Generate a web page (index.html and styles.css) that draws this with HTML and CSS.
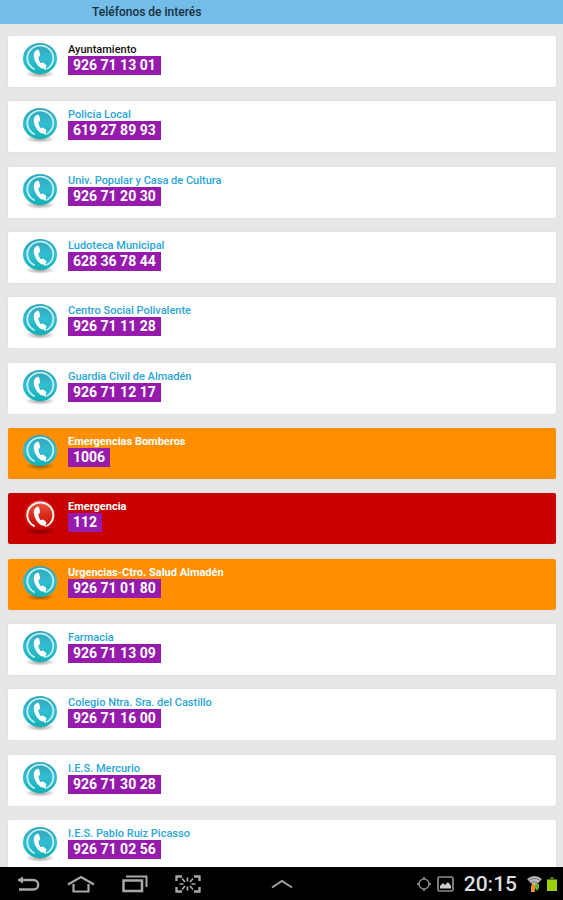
FILE: index.html
```html
<!DOCTYPE html>
<html lang="es">
<head>
<meta charset="utf-8">
<meta name="viewport" content="width=device-width, initial-scale=1">
<title>Teléfonos de interés</title>
<link rel="stylesheet" href="styles.css">
</head>
<body>
<svg class="defs" aria-hidden="true">
  <defs>
    <linearGradient id="teal" x1="0" y1="0" x2="0" y2="1">
      <stop offset="0" stop-color="#2fa5b8"/><stop offset=".5" stop-color="#33bdd2"/><stop offset="1" stop-color="#10b2b4"/>
    </linearGradient>
    <linearGradient id="red" x1="0" y1="0" x2="0" y2="1">
      <stop offset="0" stop-color="#e8604c"/><stop offset=".45" stop-color="#dc2e1c"/><stop offset="1" stop-color="#c60000"/>
    </linearGradient>
    <radialGradient id="shade">
      <stop offset="0" stop-color="#000" stop-opacity=".4"/><stop offset="1" stop-color="#000" stop-opacity="0"/>
    </radialGradient>
    <symbol id="handset" viewBox="0 0 36 36">
      <path d="M12 27A13 12.500 0 1 1 25.500 26.500" fill="none" stroke="currentColor" stroke-width="1.800" stroke-linecap="round"/>
      <path d="M14.800 8C12.500 9 11.300 11.800 11.900 15C12.800 19.700 15.600 24 19 26C21 27.100 23.300 26.400 24.200 24.700C24.600 23.900 24.500 23.200 23.800 22.600L21.300 20.700C20.600 20.200 20 20.300 19.400 20.900C18.900 21.300 18.500 21.100 18.100 20.500C17.200 19 16.700 17.500 16.400 15.800C16.300 15.200 16.500 14.900 17.200 14.600C17.900 14.300 18.200 13.800 18.100 13L17.400 9.400C17.100 8 16.200 7.400 14.800 8Z" fill="#fff"/>
      <path d="M22 25.500q1.700 .8 1.700 2.300" fill="none" stroke="#fff" stroke-width="1.600"/>
    </symbol>
    <symbol id="phone" viewBox="0 0 36 36">
      <ellipse cx="18" cy="32" rx="15" ry="4" fill="url(#shade)"/>
      <ellipse cx="18" cy="16.500" rx="17" ry="15.500" fill="url(#teal)"/>
      <use href="#handset" width="36" height="36"/>
    </symbol>
    <symbol id="phone-red" viewBox="0 0 36 36">
      <ellipse cx="18" cy="32" rx="15" ry="4" fill="url(#shade)"/>
      <ellipse cx="18" cy="16.500" rx="15" ry="15" fill="url(#red)"/>
      <use href="#handset" width="36" height="36"/>
    </symbol>
  </defs>
</svg>
<header class="topbar"><h1 class="title">Teléfonos de interés</h1></header>
<main class="content">
  <ul class="list">
    <li><a class="card current" href="tel:926711301"><svg class="icon" aria-hidden="true"><use href="#phone"/></svg><span class="info"><span class="name">Ayuntamiento</span><span class="number">926 71 13 01</span></span></a></li>
    <li><a class="card" href="tel:619278993"><svg class="icon" aria-hidden="true"><use href="#phone"/></svg><span class="info"><span class="name">Policía Local</span><span class="number">619 27 89 93</span></span></a></li>
    <li><a class="card" href="tel:926712030"><svg class="icon" aria-hidden="true"><use href="#phone"/></svg><span class="info"><span class="name">Univ. Popular y Casa de Cultura</span><span class="number">926 71 20 30</span></span></a></li>
    <li><a class="card" href="tel:628367844"><svg class="icon" aria-hidden="true"><use href="#phone"/></svg><span class="info"><span class="name">Ludoteca Municipal</span><span class="number">628 36 78 44</span></span></a></li>
    <li><a class="card" href="tel:926711128"><svg class="icon" aria-hidden="true"><use href="#phone"/></svg><span class="info"><span class="name">Centro Social Polivalente</span><span class="number">926 71 11 28</span></span></a></li>
    <li><a class="card" href="tel:926711217"><svg class="icon" aria-hidden="true"><use href="#phone"/></svg><span class="info"><span class="name">Guardia Civil de Almadén</span><span class="number">926 71 12 17</span></span></a></li>
    <li><a class="card urgent" href="tel:1006"><svg class="icon" aria-hidden="true"><use href="#phone"/></svg><span class="info"><span class="name">Emergencias Bomberos</span><span class="number">1006</span></span></a></li>
    <li><a class="card urgent critical" href="tel:112"><svg class="icon" aria-hidden="true"><use href="#phone-red"/></svg><span class="info"><span class="name">Emergencia</span><span class="number">112</span></span></a></li>
    <li><a class="card urgent" href="tel:926710180"><svg class="icon" aria-hidden="true"><use href="#phone"/></svg><span class="info"><span class="name">Urgencias-Ctro. Salud Almadén</span><span class="number">926 71 01 80</span></span></a></li>
    <li><a class="card" href="tel:926711309"><svg class="icon" aria-hidden="true"><use href="#phone"/></svg><span class="info"><span class="name">Farmacia</span><span class="number">926 71 13 09</span></span></a></li>
    <li><a class="card" href="tel:926711600"><svg class="icon" aria-hidden="true"><use href="#phone"/></svg><span class="info"><span class="name">Colegio Ntra. Sra. del Castillo</span><span class="number">926 71 16 00</span></span></a></li>
    <li><a class="card" href="tel:926713028"><svg class="icon" aria-hidden="true"><use href="#phone"/></svg><span class="info"><span class="name">I.E.S. Mercurio</span><span class="number">926 71 30 28</span></span></a></li>
    <li><a class="card" href="tel:926710256"><svg class="icon" aria-hidden="true"><use href="#phone"/></svg><span class="info"><span class="name">I.E.S. Pablo Ruiz Picasso</span><span class="number">926 71 02 56</span></span></a></li>
  </ul>
</main>
<footer class="navbar">
  <div class="keys">
    <button class="key" type="button" aria-label="Atrás"><svg width="24" height="18" viewBox="0 0 24 18"><path d="M5 5H17.500a4.500 4.500 0 0 1 0 9.500H3" fill="none" stroke="#a8a8a8" stroke-width="2.300"/><path d="M1 5L7 1.500v7z" fill="#a8a8a8"/></svg></button>
    <button class="key" type="button" aria-label="Inicio"><svg width="28" height="18" viewBox="0 0 28 18"><path d="M1 9.500L14 2L27 9.500M6.500 9V16.500H21.500V9" fill="none" stroke="#a8a8a8" stroke-width="2.200"/></svg></button>
    <button class="key" type="button" aria-label="Recientes"><svg width="26" height="18" viewBox="0 0 26 18"><path d="M1.500 5.500H20V16H1.500Z" fill="none" stroke="#a8a8a8" stroke-width="2.500"/><path d="M4 1.500H24.500V12" fill="none" stroke="#a8a8a8" stroke-width="2"/></svg></button>
    <button class="key" type="button" aria-label="Captura de pantalla"><svg width="26" height="18" viewBox="0 0 26 18" fill="none" stroke="#a8a8a8"><path d="M1.500 6V1.500H7M19 1.500H24.500V6M24.500 12V16.500H19M7 16.500H1.500V12" stroke-width="2.300"/><path d="M12.500 2.500v4M18 3.500L15 7M20.500 9H16.500M18 14.500L15 11M12.500 15.500v-4M7 14.500L10 11M4.500 9H8.500M7 3.500L10 7" stroke-width="1.700"/></svg></button>
  </div>
  <button class="key" type="button" aria-label="Desplegar"><svg width="22" height="10" viewBox="0 0 22 10"><path d="M1 8.500L11 2L21 8.500" fill="none" stroke="#a0a0a0" stroke-width="2"/></svg></button>
  <div class="status">
    <svg width="16" height="16" viewBox="0 0 16 16" aria-hidden="true"><circle cx="8" cy="8" r="5" fill="none" stroke="#858585" stroke-width="1.500"/><path d="M8 1V4M8 12v3M1 8H4M12 8h3" stroke="#858585" stroke-width="2"/></svg>
    <svg width="17" height="16" viewBox="0 0 17 16" aria-hidden="true"><rect x="1" y="1" width="15" height="14" rx="1.500" fill="none" stroke="#8d8d8d" stroke-width="1.700"/><path d="M3 12.500V10L6 7L8 9L11 6L14 10v2.500z" fill="#cfcfcf"/></svg>
    <time class="clock">20:15</time>
    <svg width="15" height="18" viewBox="0 0 15 18" aria-hidden="true"><path d="M0 4Q7.500-2 15 4L7.500 12Z" fill="#b9b9b9"/><path d="M1.500 5.500Q7.500 1.500 13.500 5.500M4 8Q7.500 5.500 11 8" fill="none" stroke="#777" /><path d="M4 11L6 8.500L8 11V17H4Z" fill="#e8912b"/><path d="M8 9h4v4l-2 3l-2-3z" fill="#66b32e"/></svg>
    <svg width="10" height="16" viewBox="0 0 10 16" aria-hidden="true"><path d="M3 1h4v2h3v12H0V3h3z" fill="#9bd000"/><path d="M3 1h4v2h3v1H0V3h3z" fill="#4f6d14"/></svg>
  </div>
</footer>
</body>
</html>
```
FILE: styles.css
```css
* {
  box-sizing: border-box;
}

body {
  margin: 0;
  height: 100vh;
  display: flex;
  flex-direction: column;
  background: #e7e7e7;
  font-family: Roboto, "Liberation Sans", sans-serif;
}

.defs {
  position: absolute;
  width: 0;
  height: 0;
}

.topbar {
  flex: none;
  height: 24px;
  padding-left: 92px;
  display: flex;
  align-items: center;
  background: #74bde9;
}

.title {
  margin: 0;
  font-size: 12px;
  font-weight: 500;
  line-height: 16px;
  color: #15303f;
}

.content {
  flex: 1;
  min-height: 0;
  overflow-y: auto;
  scrollbar-width: none;
}

.list {
  margin: 0;
  padding: 12px 7px 0 8px;
  list-style: none;
}

.list li {
  margin-bottom: 14px;
}

.list li:nth-child(3n + 2) {
  margin-bottom: 15px;
}

.card {
  display: flex;
  align-items: flex-start;
  gap: 10px;
  height: 51px;
  padding: 6px 14px;
  border-radius: 2px;
  background: #fff;
  box-shadow: 0 0 2px rgba(0, 0, 0, 0.08);
  color: #2aa5d8;
  text-decoration: none;
}

.current {
  color: #111;
}

.urgent {
  background: #ff8f00;
  color: #fff;
}

.critical {
  background: #c80000;
}

.icon {
  flex: none;
  width: 36px;
  height: 36px;
  color: #c4eff5;
}

.critical .icon {
  color: #fff;
}

.info {
  display: flex;
  flex-direction: column;
  align-items: flex-start;
}

.name {
  padding-top: 1px;
  font-size: 11px;
  font-weight: 500;
  line-height: 13px;
}

.urgent .name {
  font-weight: 700;
}

.number {
  padding: 0 5px;
  background: #961aac;
  color: #fff;
  font-size: 14px;
  font-weight: 700;
  line-height: 19px;
}

.navbar {
  flex: none;
  height: 33px;
  padding: 0 6px;
  display: grid;
  grid-template-columns: 1fr auto 1fr;
  align-items: center;
  background: #000;
}

.keys {
  display: flex;
  align-items: center;
  gap: 27px;
  padding-left: 10px;
}

.key {
  display: flex;
  padding: 0;
  border: 0;
  background: none;
}

.status {
  display: flex;
  align-items: center;
  justify-content: flex-end;
  gap: 5px;
}

.clock {
  margin: 0 5px;
  color: #ddd;
  font-size: 21px;
  font-weight: 500;
  line-height: 32px;
}
```
